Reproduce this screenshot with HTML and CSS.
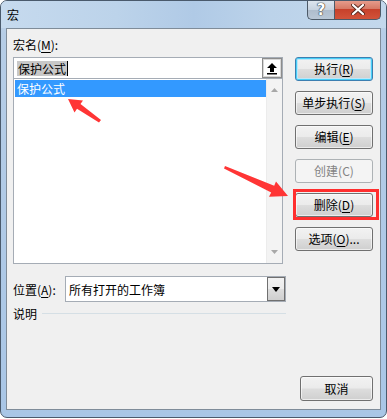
FILE: index.html
```html
<!DOCTYPE html>
<html lang="zh">
<head>
<meta charset="utf-8">
<title>宏</title>
<link rel="stylesheet" href="styles.css">
</head>
<body>
<div class="window">
  <div class="titlebar">
    <span class="title">宏</span>
    <div class="caption-btns">
      <div class="cap help">?</div>
      <div class="cap close">
        <svg width="14" height="11" viewBox="0 0 14 11"><path d="M2 1 L12 10 M12 1 L2 10" stroke="#5a2a20" stroke-width="4" stroke-linecap="round"/><path d="M2 1 L12 10 M12 1 L2 10" stroke="#fff" stroke-width="2.2" stroke-linecap="round"/></svg>
      </div>
    </div>
  </div>
  <div class="panel">
    <div class="label">宏名(<u>M</u>):</div>
    <div class="main">
      <div class="left">
        <div class="input">
          <span class="sel-text">保护公式</span><span class="caret"></span>
          <div class="collapse">
            <svg width="12" height="13" viewBox="0 0 12 13"><path d="M6 1 L11 6 H8 V10 H4 V6 H1 Z" fill="#000"/><rect x="1" y="11" width="10" height="1.5" fill="#000"/></svg>
          </div>
        </div>
        <div class="list">
          <div class="items">
            <div class="item selected">保护公式</div>
          </div>
          <div class="scrollbar">
            <svg class="sarrow" width="7" height="4" viewBox="0 0 7 4"><path d="M0 4 L3.5 0 L7 4 Z" fill="#a8a8a8"/></svg>
            <svg class="sarrow" width="7" height="4" viewBox="0 0 7 4"><path d="M0 0 L3.5 4 L7 0 Z" fill="#a8a8a8"/></svg>
          </div>
        </div>
      </div>
      <div class="buttons">
        <button class="btn default">执行(<u>R</u>)</button>
        <button class="btn">单步执行(<u>S</u>)</button>
        <button class="btn">编辑(<u>E</u>)</button>
        <button class="btn disabled">创建(C)</button>
        <button class="btn">删除(<u>D</u>)</button>
        <button class="btn">选项(<u>O</u>)...</button>
      </div>
    </div>
    <div class="loc-row">
      <span class="loc-label">位置(<u>A</u>):</span>
      <div class="select">
        <span class="select-text">所有打开的工作簿</span>
        <div class="drop">
          <svg width="8" height="5" viewBox="0 0 8 5"><path d="M0 0 H8 L4 5 Z" fill="#000"/></svg>
        </div>
      </div>
    </div>
    <div class="desc-row">
      <span>说明</span>
      <div class="rule"></div>
    </div>
    <div class="bottom">
      <button class="btn cancel">取消</button>
    </div>
  </div>
  <div class="highlight-box"></div>
  <svg class="annot" width="387" height="419" viewBox="0 0 387 419">
    <path d="M68 99 L83 100.5 L80.5 104 L101 120 L99 122.5 L77 108.8 L74.5 112.5 Z" fill="#ff3535"/>
    <path d="M288 196 L276 181.5 L274.2 185.8 L225 166 L224 168.5 L271.2 192.6 L269 196.8 Z" fill="#ff3535"/>
  </svg>
</div>
</body>
</html>
```

FILE: styles.css
```css
* { box-sizing: border-box; }
html, body {
  margin: 0;
  padding: 0;
  background: #ffffff;
}
body {
  width: 387px;
  height: 419px;
  overflow: hidden;
  font-family: "Noto Sans CJK SC", "Noto Sans", sans-serif;
  font-size: 12px;
  color: #000;
}
u { text-decoration: underline; text-underline-offset: 2px; }

.window {
  position: relative;
  width: 387px;
  height: 418px;
  border: 1px solid #4a5a6c;
  border-radius: 7px;
  background: linear-gradient(180deg, #c3d7ec 0%, #b6cde6 8%, #a9c6e6 100%);
  display: flex;
  flex-direction: column;
  overflow: hidden;
}

.titlebar {
  height: 27px;
  display: flex;
  justify-content: space-between;
  align-items: flex-start;
  background: linear-gradient(90deg, #c6daee 0%, #bcd3ea 30%, #b0cae6 50%, #bcd3ea 70%, #c3d8ec 100%);
}
.title {
  margin: 6px 0 0 6px;
  line-height: 16px;
  font-size: 12px;
}
.caption-btns {
  display: flex;
  margin-right: 5px;
  margin-top: -1px;
}
.cap {
  height: 20px;
  display: flex;
  align-items: center;
  justify-content: center;
  border: 1px solid #4d5a68;
  border-top: none;
}
.help {
  width: 27px;
  border-radius: 0 0 0 5px;
  border-right: none;
  background: linear-gradient(180deg, #dfe7f0 0%, #c7d3e0 50%, #aebccc 51%, #b9c7d6 100%);
  color: #fff;
  font-family: "DejaVu Sans", sans-serif;
  font-weight: bold;
  font-size: 15px;
  text-shadow: 0 0 1px #333, 0 0 1px #333, 0 0 1px #333;
}
.close {
  width: 47px;
  border-radius: 0 0 5px 0;
  background: linear-gradient(180deg, #e8a090 0%, #d77a66 45%, #c7412b 50%, #d2533a 100%);
}

.panel {
  flex: 1;
  margin: 0 5px 7px 5px;
  border: 1px solid #7f8c99;
  background: #f0f0f0;
  display: flex;
  flex-direction: column;
  padding: 0 0 0 6px;
}

.label {
  margin-top: 8px;
  line-height: 16px;
  height: 16px;
}

.main {
  display: flex;
  gap: 12px;
  margin-top: 4px;
}
.left {
  width: 270px;
  display: flex;
  flex-direction: column;
}
.input {
  height: 21px;
  border: 1px solid #a5acb5;
  border-bottom: none;
  background: #fff;
  display: flex;
  align-items: center;
  padding-left: 3px;
  position: relative;
}
.sel-text {
  background: #c8c8c8;
  line-height: 15px;
  padding: 0 1px;
}
.caret {
  width: 1px;
  height: 15px;
  background: #000;
}
.collapse {
  margin-left: auto;
  width: 20px;
  height: 20px;
  border: 1px solid #8c8c8c;
  box-shadow: inset 0 0 0 1px #d8d8d8;
  background: #fff;
  display: flex;
  align-items: center;
  justify-content: center;
}
.list {
  height: 186px;
  border: 1px solid #a5acb5;
  background: #fff;
  display: flex;
}
.items {
  flex: 1;
  padding: 1px 0 0 1px;
}
.item {
  height: 17px;
  line-height: 17px;
  padding-left: 2px;
}
.item.selected {
  background: #3399ff;
  color: #fff;
}
.scrollbar {
  width: 16px;
  background: #f3f3f3;
  border-left: 1px solid #ececec;
  display: flex;
  flex-direction: column;
  justify-content: space-between;
  align-items: center;
  padding: 9px 0 9px 0;
}

.buttons {
  width: 78px;
  display: flex;
  flex-direction: column;
  gap: 10px;
}
.btn {
  height: 24px;
  width: 78px;
  margin: 0;
  padding: 0;
  font-family: "Noto Sans CJK SC", "Noto Sans", sans-serif;
  font-size: 12px;
  color: #000;
  border: 1px solid #707070;
  border-radius: 3px;
  background: linear-gradient(180deg, #f2f2f2 0%, #ebebeb 48%, #dddddd 52%, #cfcfcf 100%);
  box-shadow: inset 0 0 0 1px rgba(255,255,255,0.6);
  line-height: 20px;
}
.btn.default {
  border-color: #3c7fb1;
  box-shadow: inset 0 0 0 1px #48d0f8, inset 0 0 0 2px #bfe6f8;
  background: linear-gradient(180deg, #f2f2f2 0%, #ebebeb 48%, #dddddd 52%, #cfcfcf 100%);
}
.btn.disabled {
  color: #838383;
  border-color: #adb2b5;
  background: #f4f4f4;
  box-shadow: none;
}

.loc-row {
  display: flex;
  align-items: center;
  margin-top: 12px;
  height: 26px;
}
.loc-label {
  width: 52px;
}
.select {
  width: 221px;
  height: 26px;
  border: 1px solid #a5acb5;
  background: #fff;
  display: flex;
  align-items: center;
  padding-left: 3px;
}
.select-text { flex: 1; }
.drop {
  width: 18px;
  height: 24px;
  border: 1px solid #707070;
  background: linear-gradient(180deg, #f2f2f2 0%, #ebebeb 48%, #dddddd 52%, #cfcfcf 100%);
  display: flex;
  align-items: center;
  justify-content: center;
}

.desc-row {
  display: flex;
  align-items: center;
  margin-top: 3px;
  height: 17px;
  width: 273px;
}
.rule {
  flex: 1;
  height: 1px;
  background: #d5dfe5;
  margin-left: 5px;
}

.bottom {
  margin-top: auto;
  margin-bottom: 8px;
  display: flex;
  justify-content: flex-end;
  padding-right: 7px;
}
.btn.cancel {
  width: 73px;
  height: 25px;
}

.highlight-box {
  position: absolute;
  left: 292px;
  top: 188px;
  width: 86px;
  height: 31px;
  border: 3px solid #ff2e2e;
}
.annot {
  position: absolute;
  left: -1px;
  top: -1px;
  pointer-events: none;
}
```
